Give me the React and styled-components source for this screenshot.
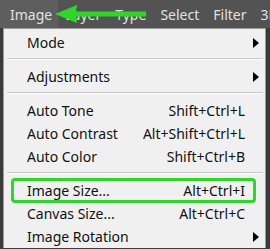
import React from 'react';
import styled, { createGlobalStyle } from 'styled-components';

const GlobalStyle = createGlobalStyle`
  html, body {
    margin: 0;
    padding: 0;
    background: #3c3c3c;
  }
  body {
    font-family: "Noto Sans", "Open Sans", sans-serif;
    overflow: hidden;
  }
`

const Screen = styled.div`
  width: 270px;
  height: 249px;
  position: relative;
  overflow: hidden;
  background: #3a3a3a;
`
const MenuBar = styled.div`
  display: flex;
  height: 28px;
  background: #535353;
  white-space: nowrap;
`
const BarItem = styled.div`
  display: flex;
  align-items: center;
  padding: 0 ${p => p.padRight || 7}px 0 ${p => p.padLeft || 7}px;
  height: 100%;
  font-size: 14px;
  color: #e2e2e2;
  background: ${p => (p.active ? '#5e5e5e' : 'transparent')};
`
const Body = styled.div`
  display: flex;
  padding-left: 3px;
`
const Menu = styled.div`
  width: 261px;
  background: #f0f0f0;
  border: 1px solid #9a9a9a;
  border-bottom: none;
  padding-top: 2px;
`
const Row = styled.div`
  position: relative;
  display: grid;
  grid-template-columns: 1fr auto 20px;
  align-items: center;
  height: 23px;
  padding-left: 23px;
  font-size: 14px;
  color: #111;

  &::after {
    content: '';
    display: ${p => (p.marked ? 'block' : 'none')};
    position: absolute;
    top: -1px;
    bottom: -1px;
    left: 7px;
    right: 9px;
    border: 3px solid #2fd62a;
    border-radius: 4px;
  }
`
const Shortcut = styled.span`
  text-align: right;
`
const Arrow = styled.span`
  justify-self: end;
  margin-right: 6px;
  width: 0;
  height: 0;
  border-top: 5px solid transparent;
  border-bottom: 5px solid transparent;
  border-left: 6px solid #000;
`
const Separator = styled.div`
  margin: 4px 2px 5px 3px;
  height: 1px;
  background: #c6c6c6;
  border-bottom: 1px solid #fff;
`
const Pointer = styled.svg`
  position: absolute;
  left: 0;
  top: 0;
`

const menu = [
  { label: 'Mode', sub: true },
  'sep',
  { label: 'Adjustments', sub: true },
  'sep',
  { label: 'Auto Tone', key: 'Shift+Ctrl+L' },
  { label: 'Auto Contrast', key: 'Alt+Shift+Ctrl+L' },
  { label: 'Auto Color', key: 'Shift+Ctrl+B' },
  'sep',
  { label: 'Image Size...', key: 'Alt+Ctrl+I', marked: true },
  { label: 'Canvas Size...', key: 'Alt+Ctrl+C' },
  { label: 'Image Rotation', sub: true },
]

const App = () => {
  return (
    <Screen>
      <GlobalStyle />
      <MenuBar>
        <BarItem active padLeft={10} padRight={6}>Image</BarItem>
        <BarItem>Layer</BarItem>
        <BarItem>Type</BarItem>
        <BarItem>Select</BarItem>
        <BarItem>Filter</BarItem>
        <BarItem>3D</BarItem>
      </MenuBar>
      <Body>
        <Menu>
          {menu.map((item, i) =>
            item === 'sep' ? (
              <Separator key={i} />
            ) : (
              <Row key={i} marked={item.marked}>
                <span>{item.label}</span>
                <Shortcut>{item.key}</Shortcut>
                {item.sub ? <Arrow /> : <span />}
              </Row>
            )
          )}
        </Menu>
      </Body>
      <Pointer width="270" height="30" viewBox="0 0 270 30">
        <polygon points="55,14 77,5 76,11.5 146,11.5 146,16.5 76,16.5 77,23" fill="#2fd62a" />
      </Pointer>
    </Screen>
  )
}

export default App;
